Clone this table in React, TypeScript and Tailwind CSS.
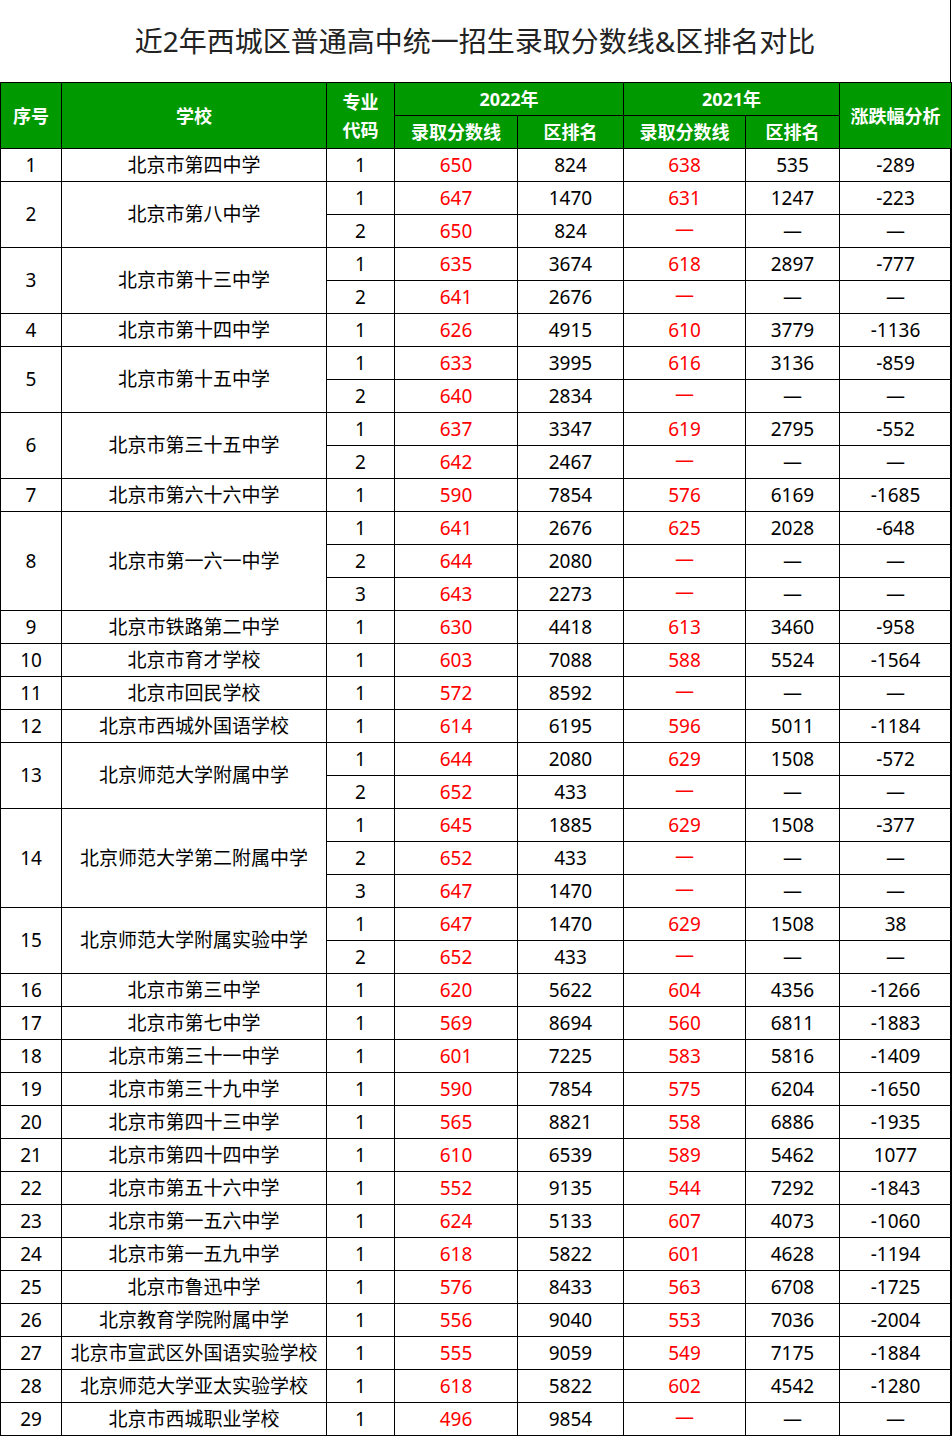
import React from 'react';

type Row = {
  code: number;
  s22: string;
  r22: string;
  s21?: string;
  r21?: string;
  diff?: string;
};

type School = { no: number; name: string; rows: Row[] };

const schools: School[] = [
  { no: 1, name: '北京市第四中学', rows: [{ code: 1, s22: '650', r22: '824', s21: '638', r21: '535', diff: '-289' }] },
  {
    no: 2,
    name: '北京市第八中学',
    rows: [
      { code: 1, s22: '647', r22: '1470', s21: '631', r21: '1247', diff: '-223' },
      { code: 2, s22: '650', r22: '824' },
    ],
  },
  {
    no: 3,
    name: '北京市第十三中学',
    rows: [
      { code: 1, s22: '635', r22: '3674', s21: '618', r21: '2897', diff: '-777' },
      { code: 2, s22: '641', r22: '2676' },
    ],
  },
  { no: 4, name: '北京市第十四中学', rows: [{ code: 1, s22: '626', r22: '4915', s21: '610', r21: '3779', diff: '-1136' }] },
  {
    no: 5,
    name: '北京市第十五中学',
    rows: [
      { code: 1, s22: '633', r22: '3995', s21: '616', r21: '3136', diff: '-859' },
      { code: 2, s22: '640', r22: '2834' },
    ],
  },
  {
    no: 6,
    name: '北京市第三十五中学',
    rows: [
      { code: 1, s22: '637', r22: '3347', s21: '619', r21: '2795', diff: '-552' },
      { code: 2, s22: '642', r22: '2467' },
    ],
  },
  { no: 7, name: '北京市第六十六中学', rows: [{ code: 1, s22: '590', r22: '7854', s21: '576', r21: '6169', diff: '-1685' }] },
  {
    no: 8,
    name: '北京市第一六一中学',
    rows: [
      { code: 1, s22: '641', r22: '2676', s21: '625', r21: '2028', diff: '-648' },
      { code: 2, s22: '644', r22: '2080' },
      { code: 3, s22: '643', r22: '2273' },
    ],
  },
  { no: 9, name: '北京市铁路第二中学', rows: [{ code: 1, s22: '630', r22: '4418', s21: '613', r21: '3460', diff: '-958' }] },
  { no: 10, name: '北京市育才学校', rows: [{ code: 1, s22: '603', r22: '7088', s21: '588', r21: '5524', diff: '-1564' }] },
  { no: 11, name: '北京市回民学校', rows: [{ code: 1, s22: '572', r22: '8592' }] },
  { no: 12, name: '北京市西城外国语学校', rows: [{ code: 1, s22: '614', r22: '6195', s21: '596', r21: '5011', diff: '-1184' }] },
  {
    no: 13,
    name: '北京师范大学附属中学',
    rows: [
      { code: 1, s22: '644', r22: '2080', s21: '629', r21: '1508', diff: '-572' },
      { code: 2, s22: '652', r22: '433' },
    ],
  },
  {
    no: 14,
    name: '北京师范大学第二附属中学',
    rows: [
      { code: 1, s22: '645', r22: '1885', s21: '629', r21: '1508', diff: '-377' },
      { code: 2, s22: '652', r22: '433' },
      { code: 3, s22: '647', r22: '1470' },
    ],
  },
  {
    no: 15,
    name: '北京师范大学附属实验中学',
    rows: [
      { code: 1, s22: '647', r22: '1470', s21: '629', r21: '1508', diff: '38' },
      { code: 2, s22: '652', r22: '433' },
    ],
  },
  { no: 16, name: '北京市第三中学', rows: [{ code: 1, s22: '620', r22: '5622', s21: '604', r21: '4356', diff: '-1266' }] },
  { no: 17, name: '北京市第七中学', rows: [{ code: 1, s22: '569', r22: '8694', s21: '560', r21: '6811', diff: '-1883' }] },
  { no: 18, name: '北京市第三十一中学', rows: [{ code: 1, s22: '601', r22: '7225', s21: '583', r21: '5816', diff: '-1409' }] },
  { no: 19, name: '北京市第三十九中学', rows: [{ code: 1, s22: '590', r22: '7854', s21: '575', r21: '6204', diff: '-1650' }] },
  { no: 20, name: '北京市第四十三中学', rows: [{ code: 1, s22: '565', r22: '8821', s21: '558', r21: '6886', diff: '-1935' }] },
  { no: 21, name: '北京市第四十四中学', rows: [{ code: 1, s22: '610', r22: '6539', s21: '589', r21: '5462', diff: '1077' }] },
  { no: 22, name: '北京市第五十六中学', rows: [{ code: 1, s22: '552', r22: '9135', s21: '544', r21: '7292', diff: '-1843' }] },
  { no: 23, name: '北京市第一五六中学', rows: [{ code: 1, s22: '624', r22: '5133', s21: '607', r21: '4073', diff: '-1060' }] },
  { no: 24, name: '北京市第一五九中学', rows: [{ code: 1, s22: '618', r22: '5822', s21: '601', r21: '4628', diff: '-1194' }] },
  { no: 25, name: '北京市鲁迅中学', rows: [{ code: 1, s22: '576', r22: '8433', s21: '563', r21: '6708', diff: '-1725' }] },
  { no: 26, name: '北京教育学院附属中学', rows: [{ code: 1, s22: '556', r22: '9040', s21: '553', r21: '7036', diff: '-2004' }] },
  { no: 27, name: '北京市宣武区外国语实验学校', rows: [{ code: 1, s22: '555', r22: '9059', s21: '549', r21: '7175', diff: '-1884' }] },
  { no: 28, name: '北京师范大学亚太实验学校', rows: [{ code: 1, s22: '618', r22: '5822', s21: '602', r21: '4542', diff: '-1280' }] },
  { no: 29, name: '北京市西城职业学校', rows: [{ code: 1, s22: '496', r22: '9854' }] },
];

const td = 'border border-black h-[33px] p-0 text-center align-middle';
const th = 'border border-black p-0 text-center align-middle bg-[#009900] text-white font-bold text-[18px]';

const Dash = ({ red }: { red?: boolean }) => (
  <span className={red ? 'text-[#ff0000] relative -top-[2px]' : 'text-black'}>—</span>
);

export default function App() {
  return (
    <div
      className="w-[951px] border-r border-black bg-white text-black"
      style={{ fontFamily: '"Noto Sans", "Noto Sans CJK SC", sans-serif' }}
    >
      <h1 className="h-[82px] flex items-center justify-center text-[28px] font-normal text-[#222] leading-none pb-[1px]">
        近2年西城区普通高中统一招生录取分数线&amp;区排名对比
      </h1>
      <table className="w-[951px] border-collapse table-fixed text-[19px] leading-none -mr-px">
        <colgroup>
          <col className="w-[61px]" />
          <col className="w-[265px]" />
          <col className="w-[68px]" />
          <col className="w-[123px]" />
          <col className="w-[106px]" />
          <col className="w-[122px]" />
          <col className="w-[94px]" />
          <col className="w-[112px]" />
        </colgroup>
        <thead>
          <tr className="h-[33px]">
            <th rowSpan={2} className={th}>序号</th>
            <th rowSpan={2} className={th}>学校</th>
            <th rowSpan={2} className={`${th} leading-[28px]`}>
              专业
              <br />
              代码
            </th>
            <th colSpan={2} className={th}>2022年</th>
            <th colSpan={2} className={th}>2021年</th>
            <th rowSpan={2} className={th}>涨跌幅分析</th>
          </tr>
          <tr className="h-[33px]">
            <th className={th}>录取分数线</th>
            <th className={th}>区排名</th>
            <th className={th}>录取分数线</th>
            <th className={th}>区排名</th>
          </tr>
        </thead>
        <tbody>
          {schools.map((s) =>
            s.rows.map((r, i) => (
              <tr key={`${s.no}-${i}`} className="h-[33px]">
                {i === 0 && (
                  <>
                    <td rowSpan={s.rows.length} className={td}>{s.no}</td>
                    <td rowSpan={s.rows.length} className={td}>{s.name}</td>
                  </>
                )}
                <td className={td}>{r.code}</td>
                <td className={`${td} text-[#ff0000]`}>{r.s22}</td>
                <td className={td}>{r.r22}</td>
                <td className={`${td} text-[#ff0000]`}>{r.s21 ?? <Dash red />}</td>
                <td className={td}>{r.r21 ?? <Dash />}</td>
                <td className={td}>{r.diff ?? <Dash />}</td>
              </tr>
            ))
          )}
        </tbody>
      </table>
    </div>
  );
}
